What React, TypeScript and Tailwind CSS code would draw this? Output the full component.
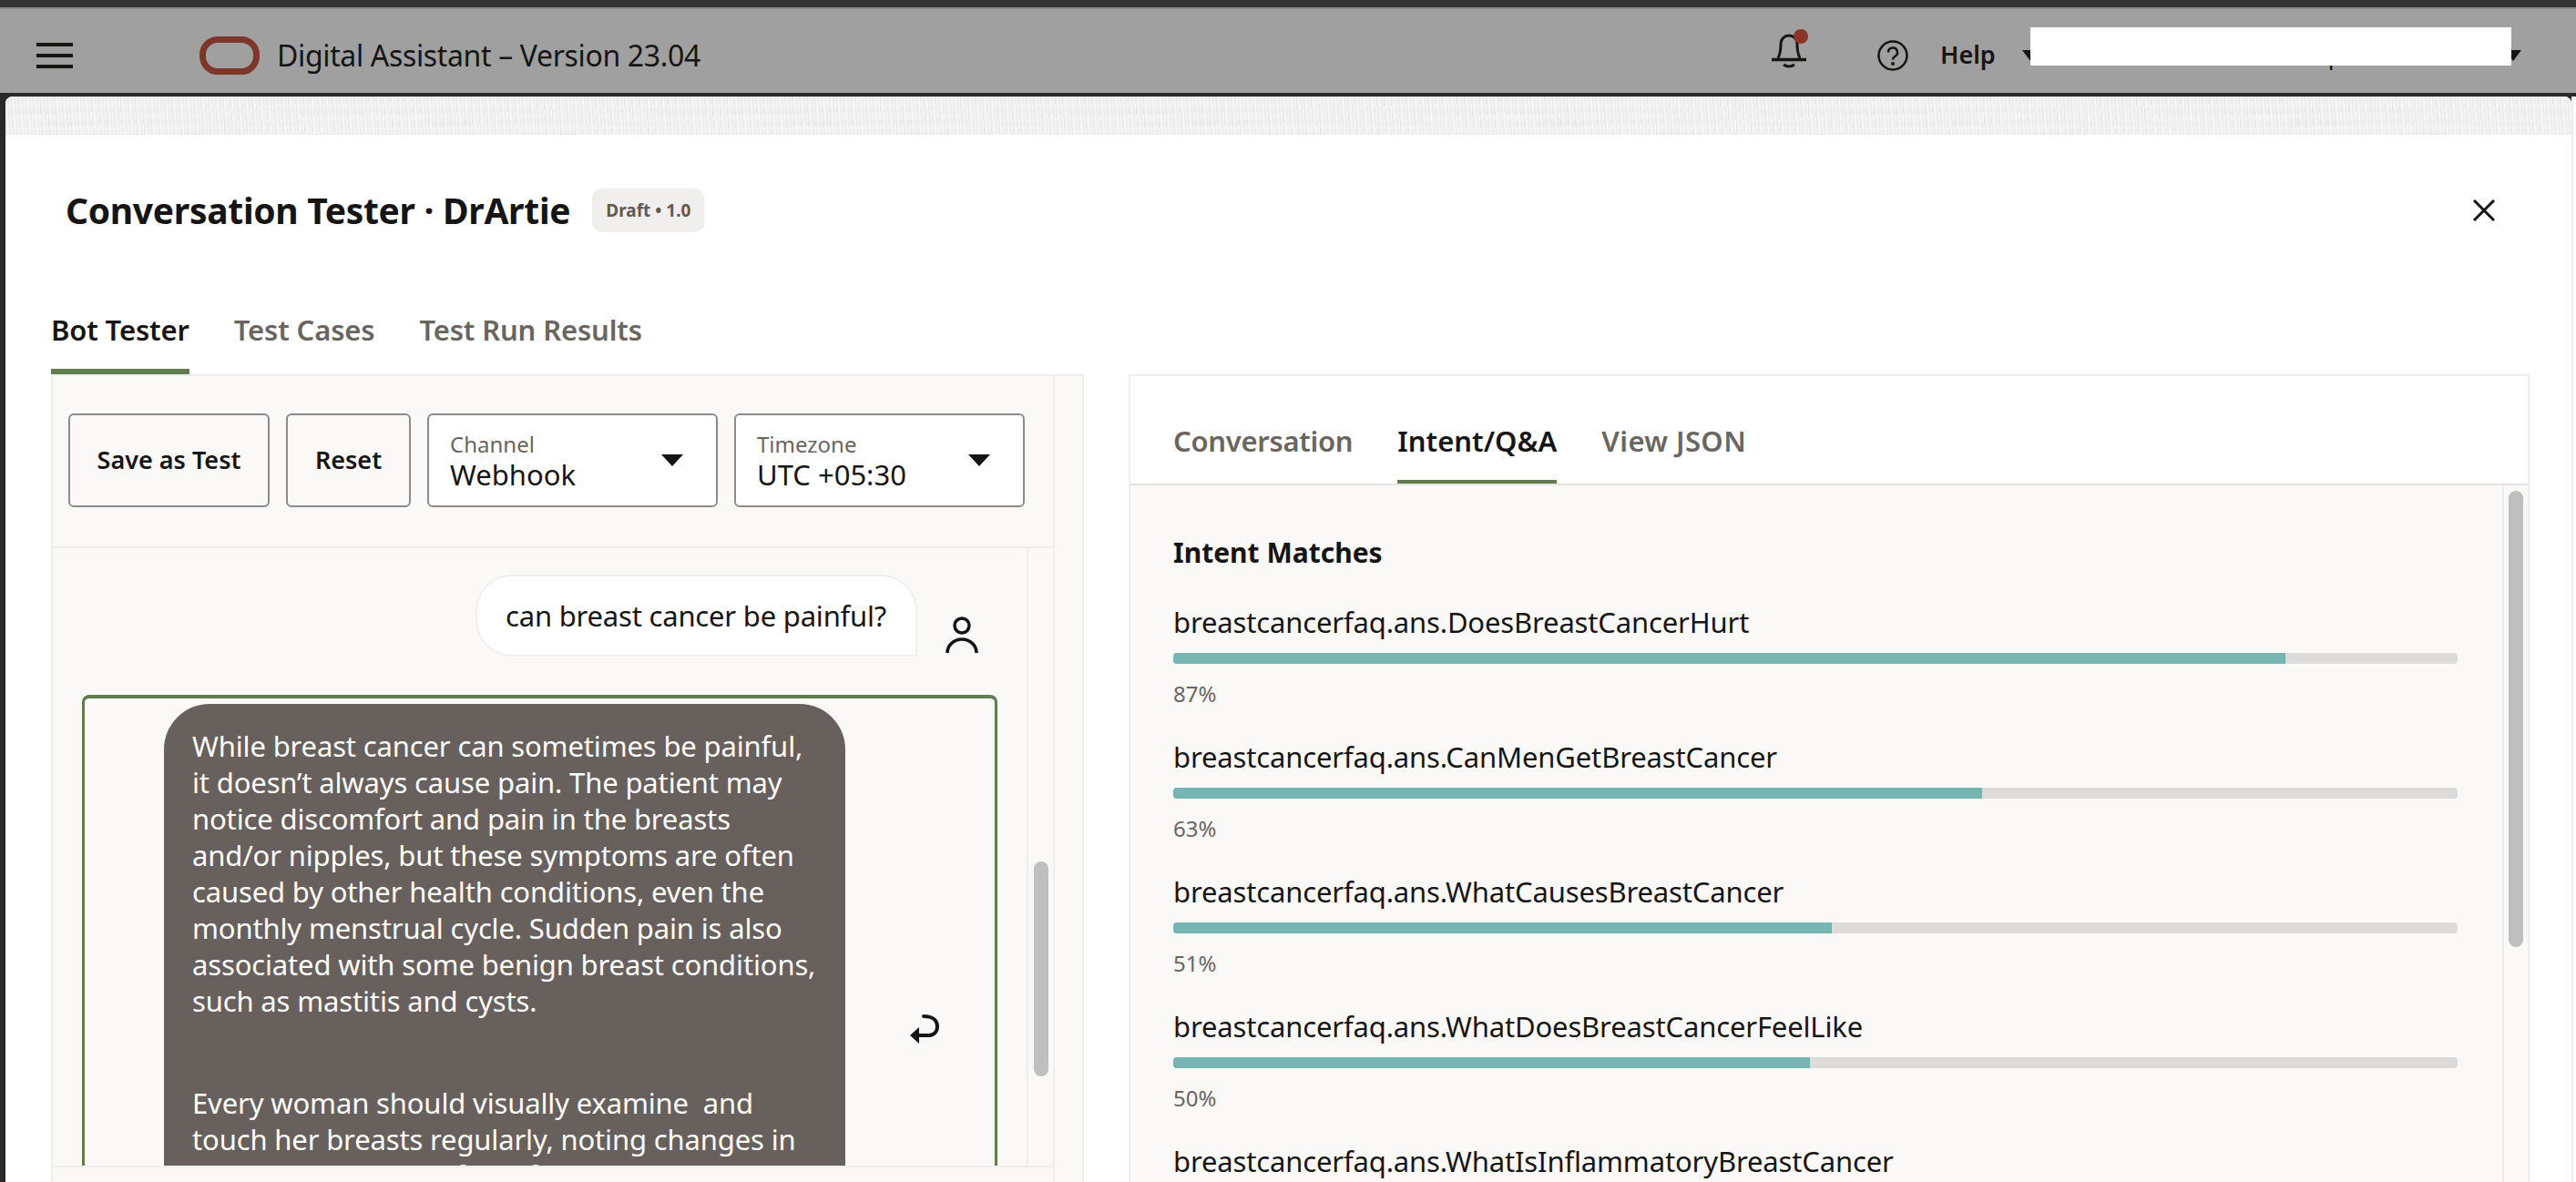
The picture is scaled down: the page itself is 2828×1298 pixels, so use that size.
const intents = [
  { name: "breastcancerfaq.ans.DoesBreastCancerHurt", fill: 86.6 },
  { name: "breastcancerfaq.ans.CanMenGetBreastCancer", fill: 63 },
  { name: "breastcancerfaq.ans.WhatCausesBreastCancer", fill: 51.3 },
  { name: "breastcancerfaq.ans.WhatDoesBreastCancerFeelLike", fill: 49.6 },
];

const Select = ({ label, value }: { label: string; value: string }) => (
  <div className="w-[319px] h-[103px] bg-white border-2 border-[#8b8b8b] rounded-[6px] flex items-center justify-between pl-[23px] pr-[36px]">
    <div className="flex flex-col">
      <span className="text-[24px] leading-[30px] text-[#6b6560]">{label}</span>
      <span className="text-[31px] leading-[36px] text-[#161513]">{value}</span>
    </div>
    <div className="w-0 h-0 border-x-[12px] border-x-transparent border-t-[13px] border-t-[#161513]" />
  </div>
);

export default function App() {
  return (
    <div className="w-[2828px] h-[1298px] overflow-hidden flex flex-col bg-[#2b2927] font-['Noto_Sans',sans-serif] text-[#161513]">
      <div className="h-[10px] shrink-0 bg-[#343434] border-b-2 border-[#8a8a8a]" />
      <header className="h-[92px] shrink-0 bg-[#a0a0a0] flex items-center relative pt-[9px]">
        <div className="ml-[40px] w-[40px] flex flex-col gap-[8px]">
          <div className="h-[4px] bg-[#161513]" />
          <div className="h-[4px] bg-[#161513]" />
          <div className="h-[4px] bg-[#161513]" />
        </div>
        <div className="ml-[139px] w-[66px] h-[42px] rounded-[20px] border-[7px] border-[#7d362a]" />
        <span className="ml-[19px] text-[32px] tracking-[-0.35px] text-[#161513]">Digital Assistant – Version 23.04</span>
        <div className="ml-auto relative mr-[76px] w-[40px] h-[44px] mb-[10px]">
          <svg viewBox="0 0 40 44" className="w-[40px] h-[44px]" fill="none" stroke="#161513" strokeWidth="3">
            <path d="M7 30C9 26 10 22 10 14a9 9 0 0 1 18 0c0 8 1 12 3 16" />
            <path d="M0 31.500h38" strokeWidth="3.500" />
            <path d="M13 37q6 4 12 0" />
          </svg>
          <div className="absolute top-[-2px] left-[24px] w-[16px] h-[16px] rounded-full bg-[#8c3427]" />
        </div>
        <svg viewBox="0 0 34 34" className="w-[34px] h-[34px] mr-[35px]" fill="none" stroke="#161513" strokeWidth="2.500">
          <circle cx="17" cy="17" r="15.500" />
          <path d="M12 13.500a5 5 0 1 1 7.500 4.300c-1.500 1-2.500 1.700-2.500 3.700" />
          <circle cx="17" cy="26" r="0.800" />
        </svg>
        <span className="text-[27px] font-semibold w-[90px]">Help</span>
        <div className="w-0 h-0 border-x-[9px] border-x-transparent border-t-[12px] border-t-[#161513]" />
        <div className="w-[512px] pl-[308px] text-[27px]">q</div>
        <div className="w-0 h-0 border-x-[9px] border-x-transparent border-t-[12px] border-t-[#161513] mr-[60px]" />
        <div className="absolute left-[2229px] top-[20px] w-[528px] h-[42px] bg-white" />
      </header>
      <div className="h-[4px] shrink-0 bg-[#2b2927]" />
      <div className="flex-1 flex min-h-0">
        <div className="w-[6px] shrink-0 bg-[#2b2927]" />
        <main className="w-[2817px] bg-white rounded-tl-[8px] rounded-tr-[8px] overflow-hidden flex flex-col">
          <div className="h-[42px] shrink-0 bg-[#f3f3f3] bg-[repeating-linear-gradient(86deg,rgba(225,225,225,0.7)_0px,rgba(250,250,250,0.6)_3px,rgba(232,232,232,0.6)_5px,rgba(250,250,250,0.5)_8px),repeating-linear-gradient(0deg,rgba(235,235,235,0.5)_0px,rgba(250,250,250,0.4)_7px,rgba(235,235,235,0.5)_13px)]" />
          <div className="h-[166px] shrink-0 flex items-center pl-[66px]">
            <h1 className="text-[39px] tracking-[-0.3px] font-bold">Conversation Tester · DrArtie</h1>
            <span className="ml-[24px] px-[15px] h-[48px] flex items-center rounded-[10px] bg-[#f1efed] text-[19px] font-bold text-[#5f5a54]">Draft • 1.0</span>
            <svg viewBox="0 0 24 24" className="ml-auto mr-[84px] w-[24px] h-[24px]" fill="none" stroke="#161513" strokeWidth="3">
              <path d="M1 1l22 22M23 1L1 23" />
            </svg>
          </div>
          <div className="h-[97px] shrink-0 flex gap-[49px] pl-[50px] text-[31px] tracking-[-0.15px] font-semibold text-[#6b6560]">
            <div className="h-full border-b-[6px] border-[#5f7d4f] text-[#161513] pt-[25px]">Bot Tester</div>
            <div className="pt-[25px]">Test Cases</div>
            <div className="pt-[25px]">Test Run Results</div>
          </div>
          <div className="flex-1 min-h-0 flex pl-[50px] gap-[49px]">
            <section className="w-[1134px] bg-[#faf9f7] border-t-2 border-l-2 border-r-2 border-[#efeeec] flex">
              <div className="w-[1100px] flex flex-col border-r-2 border-[#efeeec]">
                <div className="h-[189px] shrink-0 flex items-center gap-[18px] pl-[17px] pb-[2px] border-b-2 border-[#efeeec]">
                  <button className="w-[221px] h-[103px] border-2 border-[#8b8b8b] rounded-[6px] text-[27px] font-semibold">Save as Test</button>
                  <button className="w-[137px] h-[103px] border-2 border-[#8b8b8b] rounded-[6px] text-[27px] font-semibold">Reset</button>
                  <Select label="Channel" value="Webhook" />
                  <Select label="Timezone" value="UTC +05:30" />
                </div>
                <div className="h-[678px] shrink-0 flex overflow-hidden">
                  <div className="w-[1071px] flex flex-col">
                    <div className="flex justify-end mt-[29px] pr-[53px]">
                      <div className="w-[485px] h-[90px] bg-white border-2 border-[#f1efed] rounded-[40px] rounded-br-none flex items-center pl-[31px] text-[31px] tracking-[-0.2px]">can breast cancer be painful?</div>
                      <svg viewBox="0 0 36 40" className="w-[36px] h-[40px] ml-[31px] mt-[46px]" fill="none" stroke="#161513" strokeWidth="3.500">
                        <circle cx="18" cy="10" r="8" />
                        <path d="M2 40a16 15 0 0 1 32 0" />
                      </svg>
                    </div>
                    <div className="mt-[42px] ml-[32px] w-[1005px] flex-1 border-x-[3px] border-t-[4px] border-[#5f7d4f] rounded-t-[8px] flex items-start overflow-hidden pt-[6px]">
                      <div className="ml-[87px] w-[748px] shrink-0 bg-[#67605c] rounded-t-[50px] pt-[26px] pb-[40px] pl-[31px] pr-[30px] text-[31px] tracking-[-0.15px] leading-[40px] text-white">
                        <p>While breast cancer can sometimes be painful, it doesn’t always cause pain. The patient may notice discomfort and pain in the breasts and/or nipples, but these symptoms are often caused by other health conditions, even the monthly menstrual cycle. Sudden pain is also associated with some benign breast conditions, such as mastitis and cysts.</p>
                        <p className="mt-[72px] whitespace-pre-wrap">Every woman should visually examine  and touch her breasts regularly, noting changes in how they appear or feel. If</p>
                      </div>
                      <svg viewBox="0 0 32 32" className="w-[32px] h-[32px] ml-[71px] mt-[341px]" fill="none" stroke="#161513" strokeWidth="4">
                        <path d="M15 2C24 2 30 6 30 13C30 19 26 23 20 23H9" strokeLinecap="round" />
                        <path d="M0 23L10 14V32Z" fill="#161513" stroke="none" />
                      </svg>
                    </div>
                  </div>
                  <div className="w-[29px] border-l-2 border-[#efeeec] pl-[6px] pt-[344px]">
                    <div className="w-[16px] h-[236px] rounded-full bg-[#bfbfbf]" />
                  </div>
                </div>
                <div className="flex-1 border-t-2 border-[#efeeec]" />
              </div>
            </section>
            <section className="w-[1538px] bg-white border-t-2 border-x-2 border-[#efeeec] flex flex-col">
              <div className="h-[120px] shrink-0 flex gap-[49px] pl-[47px] text-[31px] font-semibold text-[#6b6560] border-b-2 border-[#e4e3e1]">
                <div className="pt-[48px] tracking-[-0.3px]">Conversation</div>
                <div className="h-full border-b-[4px] border-[#5f7d4f] pt-[48px] text-[#161513]">Intent/Q&amp;A</div>
                <div className="pt-[48px] tracking-[0.4px]">View JSON</div>
              </div>
              <div className="flex-1 min-h-0 flex bg-[#faf9f7] overflow-hidden">
                <div className="w-[1506px] shrink-0 pl-[47px] pr-[49px] pt-[52px]">
                  <h2 className="text-[30px] leading-[44px] font-bold">Intent Matches</h2>
                  <div className="mt-[32px] flex flex-col gap-[30px]">
                    {intents.map((intent, index) => (
                      <div key={index}>
                        <p className="text-[31px] tracking-[-0.15px] leading-[44px]">{intent.name}</p>
                        <div className="mt-[12px] h-[12px] rounded-[4px] bg-[#dcdbd9] overflow-hidden">
                          <div className="h-full bg-[#76b5b1]" style={{ width: `${intent.fill}%` }} />
                        </div>
                        <p className="mt-[16px] text-[24px] leading-[34px] text-[#6b6560]">{Math.round(intent.fill)}%</p>
                      </div>
                    ))}
                    <p className="text-[31px] tracking-[-0.15px] leading-[44px]">breastcancerfaq.ans.WhatIsInflammatoryBreastCancer</p>
                  </div>
                </div>
                <div className="flex-1 border-l-2 border-[#efeeec] pl-[5px] pt-[6px]">
                  <div className="w-[16px] h-[501px] rounded-full bg-[#bfbfbf]" />
                </div>
              </div>
            </section>
          </div>
        </main>
        <div className="flex-1 bg-white border-l-2 border-[#ececec]" />
      </div>
    </div>
  );
}
